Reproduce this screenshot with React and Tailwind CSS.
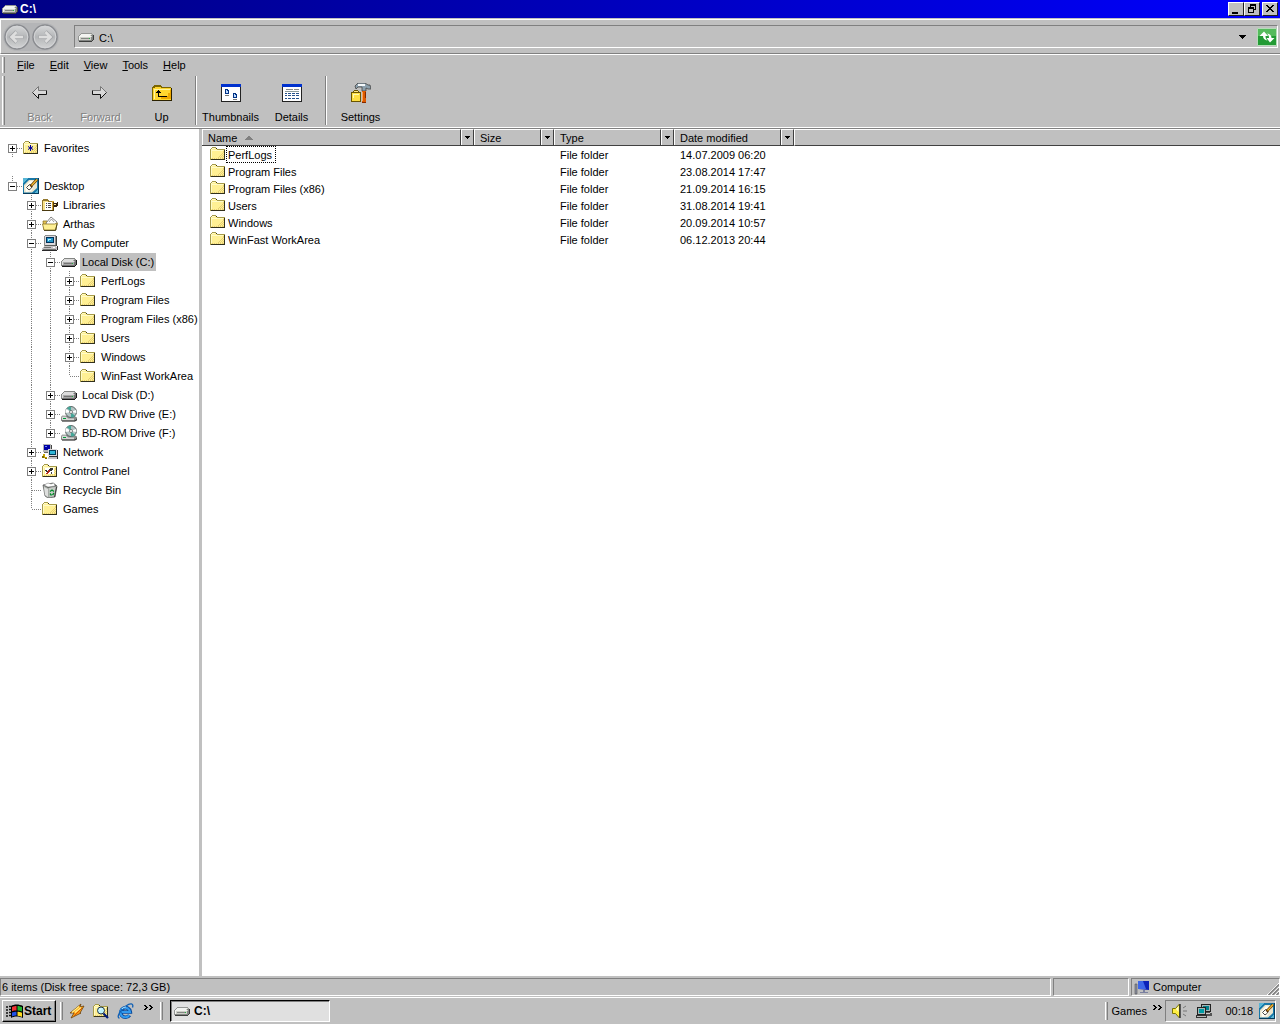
import React from "react";

function Svg({ w = 16, h = 16, children, crisp = true }) {
  return (
    <svg
      width={w}
      height={h}
      viewBox={`0 0 ${w} ${h}`}
      className="block shrink-0"
      fill="none"
      shapeRendering={crisp ? "crispEdges" : "auto"}
      aria-hidden="true"
    >
      {children}
    </svg>
  );
}

/* Draws a bitmap icon: one character per pixel, looked up in a colour table. */
function Pixels({ rows, colors, x = 0, y = 0 }) {
  const cells = [];
  rows.forEach((row, r) => {
    let c = 0;
    while (c < row.length) {
      const ch = row[c];
      let end = c + 1;
      while (row[end] === ch) end += 1;
      if (colors[ch]) {
        cells.push(<rect key={`${r}-${c}`} x={x + c} y={y + r} width={end - c} height={1} fill={colors[ch]} />);
      }
      c = end;
    }
  });
  return <>{cells}</>;
}

const FOLDER_ROWS = [
  "..oooo.........",
  ".owwwyk........",
  "owyyyyyoooooooo",
  "owwwwwwwwwwwwyk",
  "owyyyyyyyyyyydk",
  "owyyyyyyyyyyydk",
  "owyyyyyyyyyydyk",
  "owyyyyyyyyydydk",
  "owyyyyyyyydydyk",
  "owyyyyyyydydydk",
  "owyyyyyydydydyk",
  "oydydydydydyddk",
  "okkkkkkkkkkkkkk",
];
const FOLDER_COLORS = { o: "#a59a4a", w: "#fffbc8", y: "#fff094", d: "#e7cf73", k: "#31301c" };

const FolderShape = ({ x = 0, y = 1 }) => <Pixels rows={FOLDER_ROWS} colors={FOLDER_COLORS} x={x} y={y} />;

const Folder = () => (
  <Svg>
    <FolderShape />
  </Svg>
);

const Favorites = () => (
  <Svg>
    <FolderShape />
    <path d="M7.500 5v6M5 6.500l5 3M5 9.500l5-3" stroke="#00009c" shapeRendering="auto" />
  </Svg>
);

const DRIVE_ROWS = [
  "...ggggggggggg..",
  "..gwwwwwwwwwwsg.",
  ".gwwwwwwwwwwsddk",
  "gwwwwwwwwwwwwsdk",
  "gwsssssssssssddk",
  "gwsddddddddGsddk",
  "gwsssssssssssddk",
  "gdddddddddddddk.",
  ".kkkkkkkkkkkkk..",
];
const DRIVE_LIGHT = { g: "#949694", w: "#f2f3f0", s: "#ced0c8", d: "#848684", k: "#3c3d3c", G: "#20b440" };
const DRIVE_DARK = { g: "#848684", w: "#dcdcdc", s: "#a8a8a8", d: "#747474", k: "#181818", G: "#20b440" };

const Drive = ({ dark = false }) => (
  <Svg>
    <Pixels rows={DRIVE_ROWS} colors={dark ? DRIVE_DARK : DRIVE_LIGHT} y={4} />
  </Svg>
);
const TreeDrive = () => <Drive dark />;

const DesktopIcon = () => (
  <Svg>
    <path d="M0 0h16v16H0z" fill="#1878a8" />
    <path d="M0 0h5L0 5zM16 10v6h-6z" fill="#58b6d6" />
    <path d="M0 15h16v1H0zM15 0h1v16h-1z" fill="#063c5c" />
    <g shapeRendering="auto">
      <path d="M1 7 6 2h7l1 1v7l-5 4.500H1z" fill="#e9e5cf" />
      <path d="M2 9 7 3l6 1-5 9-5 1z" fill="#fffdf4" />
      <path d="M3.500 9.500l3-3 3 1-1 2.500-2.500 2z" stroke="#333" strokeWidth=".9" />
      <path d="M7.500 8.500 14 1.500" stroke="#5a3100" strokeWidth="2.600" />
      <path d="M8.500 7.500 14 1.500" stroke="#f6bd32" strokeWidth="1.300" />
    </g>
  </Svg>
);

const Libraries = () => (
  <Svg>
    <path d="M0 3h1V2h5v1h1v1h5v10H0z" fill="#f7e28a" />
    <path d="M0 3h1V2h5v1h1v1h5v1H6V4H1v10H0z" fill="#947930" />
    <path d="M3 5h7v8H3z" fill="#fff" />
    <path d="M4 6h1v1H4zM6 6h3v1H6zM4 8h1v1H4zM6 8h3v1H6zM4 10h1v1H4zM6 10h3v1H6z" fill="#444" />
    <path d="M10 4h2v9h-2z" fill="#d7a531" />
    <path d="M11 5h1v8h-1z" fill="#5c4010" />
    <path d="M12 6h3V5h1v4h-1v1h-3z" fill="#312010" />
    <path d="M12 7h2v1h-2z" fill="#ffefa0" />
    <path d="M0 13h12v1H0z" fill="#4a3a10" />
  </Svg>
);

const UserFolder = () => (
  <Svg crisp={false}>
    <path d="M1 5h4l2 2h7v7H2z" fill="#e7c352" stroke="#8c7521" strokeWidth=".8" />
    <path d="M4 7l5-6 6 5-2 4H5z" fill="#fff" stroke="#666" strokeWidth=".8" />
    <path d="M7 6l2.500-3L12 6" stroke="#777" strokeWidth=".7" />
    <path d="M.5 8h12l3-1-2 7H2z" fill="#fff094" stroke="#8c7521" strokeWidth=".8" />
    <path d="M2 14.500h11.500L15 8" stroke="#3a3410" strokeWidth=".8" />
  </Svg>
);

const Computer = () => (
  <Svg>
    <path d="M2 1h1V0h11v1h1v10H2z" fill="#8c8e8c" />
    <path d="M3 1h10v9H3z" fill="#dedbde" />
    <path d="M4 2h8v6H4z" fill="#00315a" />
    <path d="M5 3h6v4H5z" fill="#2496c8" />
    <path d="M6 4h3v1H7v1H6z" fill="#b5efff" />
    <path d="M14 1h1v10h-1z" fill="#3a3d3a" />
    <path d="M3 10h11v1H3z" fill="#5a5d5a" />
    <path d="M2 11h12v1h1v3H0v-2h1v-1h1z" fill="#c6c3c6" />
    <path d="M2 12h7v1H2zM1 14h13v1H1z" fill="#737573" />
    <path d="M11 12h2v1h-2z" fill="#fff" />
    <path d="M0 15h15v1H0zM15 11h1v4h-1z" fill="#292829" />
  </Svg>
);

const Disc = () => (
  <Svg crisp={false}>
    <path d="M1 10h12l3 2v2l-2 1H1l-1-1z" fill="#8c8e8c" stroke="#555" strokeWidth=".5" />
    <circle cx="10" cy="6" r="5.500" fill="#b4c4c4" stroke="#4f5857" strokeWidth=".9" />
    <path d="M10 6 6 2a5.500 5.500 0 0 1 4-1.500zM10 6l4 4a5.500 5.500 0 0 1-4 1.500z" fill="#45a698" />
    <path d="M10 6 4.500 7A5.500 5.500 0 0 1 5 3zM10 6l5-2a6 6 0 0 1 .4 3z" fill="#fff" />
    <circle cx="10" cy="6" r="1.500" fill="#fff" stroke="#555" strokeWidth=".7" />
    <path d="M1 10.500h4l2 2h6v2H1z" fill="#d6d7d6" />
    <path d="M2 12.500h3" stroke="#009c39" />
    <path d="M1 15h13l2-1.500" stroke="#222" strokeWidth=".9" />
  </Svg>
);

const Network = () => (
  <Svg>
    <path d="M1 0h8v8H1z" fill="#b5b6b5" />
    <path d="M2 1h6v5H2z" fill="#0000a5" />
    <path d="M3 2h2v1H3z" fill="#6b8eff" />
    <path d="M9 1h1v7H9z" fill="#444" />
    <path d="M2 8h5v1H2z" fill="#666" />
    <path d="M6 5h9v7H6z" fill="#dedbde" />
    <path d="M7 6h7v5H7z" fill="#003c5a" />
    <path d="M8 7h5v3H8z" fill="#31b6d6" />
    <path d="M15 6h1v7H7v-1h8z" fill="#333" />
    <path d="M6 13h10v2H6z" fill="#c6c3c6" />
    <path d="M6 15h10v-2h-1v2z" fill="#222" />
    <path d="M1 10h2v3h2v1H2v-2H1z" fill="#c6a200" />
    <path d="M0 12h2v2H0zM3 14h2v1H3z" fill="#7b6900" />
  </Svg>
);

const ControlPanel = () => (
  <Svg>
    <FolderShape />
    <path d="M3 5h9v6H3z" fill="#fff" />
    <path d="M3 7h2v1h1v1H4V8H3zM8 5h3v2h-1v1H8V7H7V6h1z" fill="#333" />
    <path d="M6 7h2v2H7v1H6v1H4v-1h1V9h1z" fill="#b5281c" />
    <path d="M9 9h1v2H9z" fill="#444" />
  </Svg>
);

const Recycle = () => (
  <Svg crisp={false}>
    <path d="M1 3l10-2 4 3-2 11-7 1-3-2z" fill="#a5aaa5" stroke="#555" strokeWidth=".7" />
    <path d="M1 3l10-2 4 3-9 2z" fill="#555955" />
    <path d="M2 3l4-2 3 1 3-1 1 3-7 1z" fill="#fff" stroke="#888" strokeWidth=".5" />
    <path d="M2 5l4 2v8l-3-2z" fill="#dedfde" />
    <path d="M7 6l7-1-1.500 9-5 1z" fill="#c8ccc8" />
    <path d="M8 9.500 10 8l2 1.500M12 11l-1.500 2M9.500 13.500 8 11.500" stroke="#008c29" strokeWidth="1.300" />
    <path d="M14.500 5l-2 10" stroke="#333" strokeWidth=".9" />
  </Svg>
);

const ArrowIcon = ({ right }) => (
  <Svg w={20} h={20} crisp={false}>
    <g transform={right ? "matrix(-1 0 0 1 18 0)" : undefined}>
      <path d="M2.500 9.500 8.500 3.500v4h8v4h-8v4z" fill="#d8d8d8" />
      <path d="M2.500 9.500 8.500 3.500v4h8" stroke="#777" />
      <path d="M16.500 7.500v4h-8v4l-6-6" stroke="#111" />
    </g>
  </Svg>
);

const UpIcon = () => (
  <Svg w={20} h={20}>
    <path d="M1 5h1V3h1V2h6v1h1v1h9v13H1z" fill="#ffd62e" />
    <path d="M0 4h1V3h1V2h7v1h1v1h9v1H9V4H3v1H1v12H0z" fill="#7b6500" />
    <path d="M2 6h16v1H3v9H2z" fill="#fff5a0" />
    <path d="M9 16h10V7h-1v3h-2v3h-3v1H9z" fill="#eda800" />
    <path d="M19 5h1v13H0v-1h19z" fill="#2b2100" />
    <path d="M6 7h1v1h1v1h1v1H7v3h8v1H6v-4H4V9h1V8h1z" fill="#000" />
  </Svg>
);

const ThumbsIcon = () => (
  <Svg w={20} h={18}>
    <path d="M0 0h20v18H0z" fill="#222" />
    <path d="M1 1h18v16H1z" fill="#fff" />
    <path d="M0 0h20v3H0z" fill="#0031ce" />
    <path d="M4 5h3v1h1v4H4zM12 9h3v1h1v4h-4z" fill="#003184" />
    <path d="M5 6h1v1h1v2H5zM13 10h1v1h1v2h-2z" fill="#c0dcff" />
    <path d="M4 11h4v1H4zM12 15h4v1h-4z" fill="#777" />
  </Svg>
);

const DetailsIcon = () => (
  <Svg w={20} h={18}>
    <path d="M0 0h20v18H0z" fill="#222" />
    <path d="M1 1h18v16H1z" fill="#fff" />
    <path d="M0 0h20v3H0z" fill="#0031ce" />
    <path d="M4 5.500h7M12 5.500h5" stroke="#888" />
    <path d="M3 7.500h14" stroke="#8a9a9a" />
    <path
      d="M3 9.500h2M6 9.500h3M10 9.500h3M14 9.500h3M3 11.500h2M6 11.500h3M10 11.500h3M14 11.500h3M3 14.500h2M6 14.500h3M10 14.500h3M14 14.500h3"
      stroke="#24518c"
    />
  </Svg>
);

const SettingsIcon = () => (
  <Svg w={20} h={20}>
    <path d="M4 3l3-3h7l3 2h2l1 4h-3l-2-1v3h-4V4H7L5 6z" fill="#8ca0ad" stroke="#444" strokeWidth=".8" shapeRendering="auto" />
    <path d="M7 1h7v2H7z" fill="#f4f8fa" />
    <path d="M2 8h1V7h4v1h1v1h2v10H0V9h2z" fill="#6b5500" />
    <path d="M1 10h8v8H1z" fill="#ffdf42" />
    <path d="M3 8h4v1H3z" fill="#ffe680" />
    <path d="M2 11h6v1H3v3H2z" fill="#fff9b0" />
    <path d="M11 8h4v11h-4z" fill="#de5a00" />
    <path d="M11 9h1v9h-1z" fill="#ffa552" />
    <path d="M14 9h1v10h-4v1h4z" fill="#842900" />
  </Svg>
);

const StartFlag = () => (
  <Svg w={17} h={16} crisp={false}>
    <path d="M0 4h2M0 7h2M0 10h2M0 13h2M3 3.500h2M3 6.500h2M3 9.500h2M3 12.500h2" stroke="#111" strokeWidth="1.500" />
    <path d="M5 3c3-2 8-2 12 0v12c-4-2-9-2-12 0z" fill="#000" />
    <path d="M6 4C8 3 9 3 10.500 3v4.500c-1.500 0-2.500 0-4.500.7z" fill="#ef3131" />
    <path d="M11.500 3c1.500 0 2.500.5 4.500 1v4.500c-1.500-.6-3-1-4.500-1z" fill="#21b531" />
    <path d="M6 9.500c1.500-.6 2.500-.8 4.500-.8V12.500c-1.500 0-2.500.3-4.500 1z" fill="#2151e7" />
    <path d="M11.500 8.700c1.500 0 2.500.4 4.500 1V14c-1.500-.7-2.500-1.200-4.500-1.300z" fill="#ffdb21" />
  </Svg>
);

const WinampIcon = () => (
  <Svg crisp={false}>
    <path d="M1 10 12 1l-1 3 4-1-4 7 1 0-10 5 3-5z" fill="#ff9c10" stroke="#6b4210" strokeWidth=".8" />
    <path d="M3 9.500 10 3.500M6 9.500l6-5" stroke="#ffef84" strokeWidth="1.200" />
    <path d="M5 13 13 5" stroke="#d65a00" />
  </Svg>
);

const SearchFolder = () => (
  <Svg>
    <FolderShape />
    <g shapeRendering="auto">
      <circle cx="8" cy="7.500" r="3.500" fill="#bdf3ff" stroke="#234" />
      <path d="M10.500 10.500 15 15" stroke="#001c7b" strokeWidth="2.200" />
      <path d="M6.500 7 8 5.500" stroke="#fff" />
    </g>
  </Svg>
);

const IeIcon = () => (
  <Svg w={17} h={17} crisp={false}>
    <path d="M12.500 12.200A4.800 4.800 0 1 1 13.300 9H5" stroke="#084a9c" strokeWidth="3.600" />
    <path d="M12.300 12A4.800 4.800 0 1 1 13 9H5" stroke="#319aef" strokeWidth="2.200" />
    <path d="M2.500 15C-1 15 3 7 9 3c4-3 8-3 6.500 1.500" stroke="#1060b5" strokeWidth="1.300" />
    <path d="M5 6c1-1.500 3-2 4-2" stroke="#b5e7ff" />
  </Svg>
);

const BlueMonitor = () => (
  <Svg crisp={false}>
    <path d="M1 5h2v10H1z" fill="#8a8fa0" stroke="#555" strokeWidth=".6" />
    <path d="M4 2h11v9l-11-1z" fill="#0b22b8" />
    <path d="M4 2h5l3 8H4z" fill="#3d67e8" />
    <path d="M9 11h2v2h3v1H6v-1h3z" fill="#7a80a0" />
  </Svg>
);

const Speaker = () => (
  <Svg w={17} crisp={false}>
    <path d="M1.500 5.500h3l4-4.500v14l-4-4.500h-3z" fill="#ffef42" stroke="#7b7500" />
    <path d="M9 1v14" stroke="#333" strokeWidth="1.500" />
    <path d="M5 6l2.500-3v6z" fill="#fffbd0" />
    <path d="M12 5l3-2M12 8h4M12 11l3 2" stroke="#777" />
  </Svg>
);

const NetTray = () => (
  <Svg>
    <path d="M5 1h10v8H5z" fill="#222" />
    <path d="M6 2h8v6H6z" fill="#a5b5b5" />
    <path d="M7 3h6v4H7z" fill="#00808c" />
    <path d="M9 9h5v1h2v3H9z" fill="#555" />
    <path d="M10 10h4v1h-4z" fill="#ccc" />
    <path d="M1 4h9v8H1z" fill="#222" />
    <path d="M2 5h7v6H2z" fill="#a5b5b5" />
    <path d="M3 6h5v4H3z" fill="#009ca5" />
    <path d="M0 12h11v3H0z" fill="#333" />
    <path d="M1 13h9v1H1z" fill="#bbb" />
  </Svg>
);

const NavCircle = ({ right }) => (
  <Svg w={28} h={28} crisp={false}>
    <circle cx="14" cy="14" r="12" fill={right ? "url(#navR)" : "url(#navL)"} stroke="#8a8c90" strokeWidth="1.500" />
    <circle cx="14" cy="14" r="10.800" stroke="#d4d5d7" />
    <g transform={right ? "matrix(-1 0 0 1 28 0)" : undefined}>
      <path d="M20.500 14H9M13.500 8.500 8 14l5.500 5.500" stroke="#a3a5a8" strokeWidth="3.600" />
      <path d="M20 14H9M13.500 9 8.500 14l5 5" stroke="#dedede" strokeWidth="2.600" />
    </g>
    <defs>
      <linearGradient id={right ? "navR" : "navL"} x1="0" y1="0" x2="0" y2="1">
        <stop offset="0" stopColor="#d8d9da" />
        <stop offset=".5" stopColor="#b4b6b8" />
        <stop offset="1" stopColor="#d4d5d6" />
      </linearGradient>
    </defs>
  </Svg>
);

const Caret = () => (
  <Svg w={7} h={4}>
    <path d="M0 0h7v1H6v1H5v1H4v1H3V3H2V2H1V1H0z" fill="#000" />
  </Svg>
);

const SmallCaret = () => (
  <Svg w={5} h={3}>
    <path d="M0 0h5v1H4v1H3v1H2V2H1V1H0z" fill="#000" />
  </Svg>
);

const Chevrons = () => (
  <Svg w={9} h={6}>
    <path d="M0 0h2v1h1v1h1v1H3v1H2v1H0V4h1V3h1V2H1V1H0zM5 0h2v1h1v1h1v1H8v1H7v1H5V4h1V3h1V2H6V1H5z" fill="#000" />
  </Svg>
);

const Grip = () => <div className="w-[3px] self-stretch border-r border-l border-l-white border-r-[#808080]" />;
const Separator = () => <div className="mx-[3px] w-[2px] self-stretch border-r border-l border-l-[#808080] border-r-white" />;

/* Each character of a row's path is one 19px cell of the tree's guide lines. */
const GUIDES = {
  ".": {},
  "|": { up: true, down: true },
  T: { up: true, down: true, across: true },
  L: { up: true, across: true },
  "+": { up: true, down: true, across: true, box: "+" },
  "-": { up: true, down: true, across: true, box: "-" },
  E: { up: true, across: true, box: "+" },
  F: { down: true, across: true, box: "+" },
  D: { up: true, across: true, box: "-" },
};

function Guide({ code }) {
  const g = GUIDES[code];
  const art = (
    <Svg w={19} h={19}>
      {g.up && <path d="M9.500 0v10" stroke="#808080" strokeDasharray="1 1" />}
      {g.down && <path d="M9.500 10v9" stroke="#808080" strokeDasharray="1 1" />}
      {g.across && <path d="M10 10.500h9" stroke="#808080" strokeDasharray="1 1" />}
      {g.box && (
        <>
          <path d="M5.500 6.500h8v8h-8z" fill="#fff" stroke="#808080" />
          <path d="M7 10.500h5" stroke="#000" />
          {g.box === "+" && <path d="M9.500 8v5" stroke="#000" />}
        </>
      )}
    </Svg>
  );
  return g.box ? (
    <button type="button" aria-label={g.box === "+" ? "Expand" : "Collapse"}>
      {art}
    </button>
  ) : (
    art
  );
}

const TREE = [
  ["D", DesktopIcon, "Desktop"],
  [".+", Libraries, "Libraries"],
  [".+", UserFolder, "Arthas"],
  [".-", Computer, "My Computer"],
  [".|-", TreeDrive, "Local Disk (C:)", true],
  [".||+", Folder, "PerfLogs"],
  [".||+", Folder, "Program Files"],
  [".||+", Folder, "Program Files (x86)"],
  [".||+", Folder, "Users"],
  [".||+", Folder, "Windows"],
  [".||L", Folder, "WinFast WorkArea"],
  [".|+", TreeDrive, "Local Disk (D:)"],
  [".|+", Disc, "DVD RW Drive (E:)"],
  [".|E", Disc, "BD-ROM Drive (F:)"],
  [".+", Network, "Network"],
  [".+", ControlPanel, "Control Panel"],
  [".T", Recycle, "Recycle Bin"],
  [".L", Folder, "Games"],
];

function TreeRow({ path, icon: Icon, label, selected }) {
  return (
    <li className="flex h-[19px] items-center whitespace-nowrap">
      {path.split("").map((c, i) => (
        <Guide key={i} code={c} />
      ))}
      <div className="ml-px">
        <Icon />
      </div>
      <a href="#" className={selected ? "ml-[3px] bg-[#c0c0c0] px-[2px] leading-[18px]" : "ml-[3px] px-[2px] leading-[18px]"}>
        {label}
      </a>
    </li>
  );
}

const FILES = [
  ["PerfLogs", "14.07.2009 06:20"],
  ["Program Files", "23.08.2014 17:47"],
  ["Program Files (x86)", "21.09.2014 16:15"],
  ["Users", "31.08.2014 19:41"],
  ["Windows", "20.09.2014 10:57"],
  ["WinFast WorkArea", "06.12.2013 20:44"],
];

function HeaderCell({ label, sorted }) {
  return (
    <th scope="col" className="p-0 font-normal">
      <div className="flex h-[17px] border-b border-[#404040] bg-[#c0c0c0]">
        <button
          type="button"
          className="flex min-w-0 flex-1 items-center gap-2 border-t border-r border-l border-t-white border-r-[#404040] border-l-white pl-[5px]"
        >
          {label}
          {sorted && (
            <Svg w={8} h={4}>
              <path d="M3 0h2v1h1v1h1v1h1v1H0V3h1V2h1V1h1z" fill="#808080" />
            </Svg>
          )}
        </button>
        <button
          type="button"
          aria-label={`Filter by ${label}`}
          className="flex w-[13px] items-center justify-center border-t border-r border-l border-t-white border-r-[#404040] border-l-white"
        >
          <SmallCaret />
        </button>
      </div>
    </th>
  );
}

function ToolButton({ icon, label, disabled }) {
  return (
    <button type="button" disabled={disabled} className="flex w-[61px] flex-col items-center pt-px">
      <span className="flex h-8 items-center justify-center">{icon}</span>
      <span className={disabled ? "leading-4 text-[#808080] [text-shadow:1px_1px_0_#fff]" : "leading-4"}>{label}</span>
    </button>
  );
}

const WIN_BUTTON =
  "flex h-[14px] w-4 items-center justify-center border border-t-white border-r-[#202020] border-b-[#202020] border-l-white bg-[#c0c0c0]";

export default function App() {
  return (
    <div className="flex h-screen flex-col overflow-hidden bg-[#c0c0c0] font-['Liberation_Sans',Arial,sans-serif] text-[11px] leading-4 text-black">
      <header className="flex h-[18px] items-center bg-linear-to-r from-[#000084] to-[#0000ff] pr-[2px] pl-[2px] text-white">
        <Drive />
        <h1 className="ml-[2px] flex-1 text-[12px] font-bold">C:\</h1>
        <button type="button" aria-label="Minimize" className={WIN_BUTTON}>
          <Svg w={10} h={10}>
            <path d="M1 8h6v2H1z" fill="#000" />
          </Svg>
        </button>
        <button type="button" aria-label="Restore" className={WIN_BUTTON}>
          <Svg w={10} h={10}>
            <path d="M3 0h6v6H7V5h1V2H4v1H3zM1 3h6v6H1zM2 5v3h4V5z" fill="#000" fillRule="evenodd" />
          </Svg>
        </button>
        <button type="button" aria-label="Close" className={`${WIN_BUTTON} ml-[2px]`}>
          <Svg w={10} h={10}>
            <path
              d="M1 1h2v1h1v1h2V2h1V1h2v1H8v1H7v1H6v1h1v1h1v1h1v1H7V7H6V6H4v1H3v1H1V7h1V6h1V5h1V4H3V3H2V2H1z"
              fill="#000"
            />
          </Svg>
        </button>
      </header>

      <div className="mt-px flex h-[35px] items-center border-t border-b border-l border-t-white border-b-[#808080] border-l-white pr-[2px] pl-[2px]">
        <div className="flex rounded-full bg-[#b4b5b7]">
          <button type="button" aria-label="Previous location">
            <NavCircle />
          </button>
          <button type="button" aria-label="Next location">
            <NavCircle right />
          </button>
        </div>
        <div className="ml-[15px] flex h-[23px] flex-1 items-center border border-t-[#808080] border-r-white border-b-white border-l-[#808080] pl-[3px]">
          <Drive />
          <input aria-label="Address" defaultValue="C:\" className="ml-[5px] h-5 min-w-0 flex-1 bg-transparent pt-[2px] text-[11px] outline-none" />
          <button type="button" aria-label="Address history" className="flex h-4 w-4 items-center justify-center">
            <Caret />
          </button>
          <button type="button" aria-label="Refresh" className="ml-[7px]">
            <Svg w={20} h={18} crisp={false}>
              <path d="M.5.5h19v17H.5z" fill="#239b35" stroke="#b5dcb8" />
              <path d="M1 1h18v7H1z" fill="#55bb5c" />
              <path d="M2.500 8 7 3.500l4 4.500H8.500c0 2 .5 3 2 4.500-3-.5-4.500-2-4.500-4.500z" fill="#fff" />
              <path d="M17.500 10 13 14.500 9.500 10H12c0-2-.5-3-2-4.500 3 .5 4.500 2 4.500 4.500z" fill="#fff" />
            </Svg>
          </button>
        </div>
      </div>

      <nav aria-label="Menu" className="flex h-[21px] items-center border-t border-white pl-[2px]">
        <div className="flex self-stretch py-[2px]">
          <Grip />
        </div>
        <div className="ml-[5px] flex gap-px">
          {["File", "Edit", "View", "Tools", "Help"].map((m) => (
            <button type="button" key={m} className="px-[7px]">
              <span className="underline underline-offset-1">{m[0]}</span>
              {m.slice(1)}
            </button>
          ))}
        </div>
      </nav>

      <div role="toolbar" aria-label="Standard buttons" className="flex h-[53px] border-b border-white pt-px pb-[2px] pl-[2px]">
        <Grip />
        <div className="ml-1 flex">
          <ToolButton disabled label="Back" icon={<ArrowIcon />} />
          <ToolButton disabled label="Forward" icon={<ArrowIcon right />} />
          <ToolButton label="Up" icon={<UpIcon />} />
        </div>
        <Separator />
        <ToolButton label="Thumbnails" icon={<ThumbsIcon />} />
        <ToolButton label="Details" icon={<DetailsIcon />} />
        <Separator />
        <ToolButton label="Settings" icon={<SettingsIcon />} />
      </div>

      <main className="flex min-h-0 flex-1 border-t border-[#808080]">
        <aside aria-label="Folders" className="w-[199px] shrink-0 overflow-hidden bg-white pt-[9px] pl-[3px]">
          <ul className="mb-[19px]">
            <TreeRow path="F" icon={Favorites} label="Favorites" />
          </ul>
          <ul>
            {TREE.map(([path, icon, label, selected]) => (
              <TreeRow key={path + label} path={path} icon={icon} label={label} selected={selected} />
            ))}
          </ul>
        </aside>
        <div className="w-[3px] shrink-0 bg-[#c0c0c0]" />
        <section aria-label="Files" className="min-w-0 flex-1 bg-white">
          <table className="w-full table-fixed border-collapse text-left">
            <colgroup>
              <col className="w-[272px]" />
              <col className="w-[80px]" />
              <col className="w-[120px]" />
              <col className="w-[120px]" />
              <col />
            </colgroup>
            <thead>
              <tr>
                <HeaderCell label="Name" sorted />
                <HeaderCell label="Size" />
                <HeaderCell label="Type" />
                <HeaderCell label="Date modified" />
                <td className="p-0">
                  <div className="h-[17px] border-t border-b border-l border-t-white border-b-[#404040] border-l-white bg-[#c0c0c0]" />
                </td>
              </tr>
            </thead>
            <tbody>
              {FILES.map(([name, date], i) => (
                <tr key={name} className="h-[17px]">
                  <td className="p-0">
                    <div className="flex h-[17px] items-start pl-2">
                      <Folder />
                      <a
                        href="#"
                        className={
                          i === 0
                            ? "pt-px pr-1 pl-[2px] leading-4 outline-1 -outline-offset-1 outline-black outline-dotted"
                            : "pt-px pr-1 pl-[2px] leading-4"
                        }
                      >
                        {name}
                      </a>
                    </div>
                  </td>
                  <td className="p-0" />
                  <td className="p-0 pl-[6px]">File folder</td>
                  <td className="p-0 pl-[6px]">{date}</td>
                  <td className="p-0" />
                </tr>
              ))}
            </tbody>
          </table>
        </section>
      </main>

      <footer className="flex h-[21px] gap-[2px] pt-[2px] pb-px">
        <div className="flex flex-1 items-center border border-t-[#808080] border-r-white border-b-white border-l-[#808080] pl-px">
          6 items (Disk free space: 72,3 GB)
        </div>
        <div className="w-[76px] border border-t-[#808080] border-r-white border-b-white border-l-[#808080]" />
        <div className="flex w-[149px] items-center border border-t-[#808080] border-r-white border-b-white border-l-[#808080] pl-[2px]">
          <BlueMonitor />
          <span className="ml-[3px] flex-1">Computer</span>
          <div className="self-end">
            <Svg w={12} h={12} crisp={false}>
              <path d="M0 12 12 0M4 12l8-8M8 12l4-4" stroke="#fff" />
              <path d="M1.500 12 12 1.500M5.500 12 12 5.500M9.500 12 12 9.500" stroke="#808080" strokeWidth="1.500" />
            </Svg>
          </div>
        </div>
      </footer>

      <div role="toolbar" aria-label="Taskbar" className="flex h-[27px] items-center border-t border-white pr-1 pl-[2px]">
        <button
          type="button"
          className="flex h-[22px] w-[54px] items-center gap-px border border-t-white border-r-black border-b-black border-l-white pl-[3px] text-[12px] font-bold shadow-[inset_-1px_-1px_0_#808080]"
        >
          <StartFlag />
          Start
        </button>
        <div className="ml-1 flex h-[18px]">
          <Grip />
        </div>
        <div className="ml-[6px] flex items-center gap-2">
          <button type="button" aria-label="Media player">
            <WinampIcon />
          </button>
          <button type="button" aria-label="Search files">
            <SearchFolder />
          </button>
          <button type="button" aria-label="Web browser">
            <IeIcon />
          </button>
        </div>
        <button type="button" aria-label="More shortcuts" className="mb-[6px] ml-[10px]">
          <Chevrons />
        </button>
        <div className="ml-[7px] flex h-[18px]">
          <Grip />
        </div>
        <button
          type="button"
          className="ml-[7px] flex h-[22px] w-[160px] items-center gap-1 border border-t-black border-r-white border-b-white border-l-black bg-[#e0e0e0] pl-[3px] text-[12px] font-bold shadow-[inset_1px_1px_0_#808080]"
        >
          <Drive />
          C:\
        </button>
        <div className="flex-1" />
        <div className="flex h-[18px]">
          <Grip />
        </div>
        <button type="button" className="ml-1">
          Games
        </button>
        <button type="button" aria-label="More games" className="mb-[6px] ml-[6px]">
          <Chevrons />
        </button>
        <div className="ml-[3px] flex h-[22px] w-[111px] items-center border border-t-[#808080] border-r-white border-b-white border-l-[#808080] pl-[5px]">
          <Speaker />
          <div className="ml-2">
            <NetTray />
          </div>
          <span className="ml-auto">00:18</span>
          <div className="ml-[6px]">
            <DesktopIcon />
          </div>
        </div>
      </div>
    </div>
  );
}
